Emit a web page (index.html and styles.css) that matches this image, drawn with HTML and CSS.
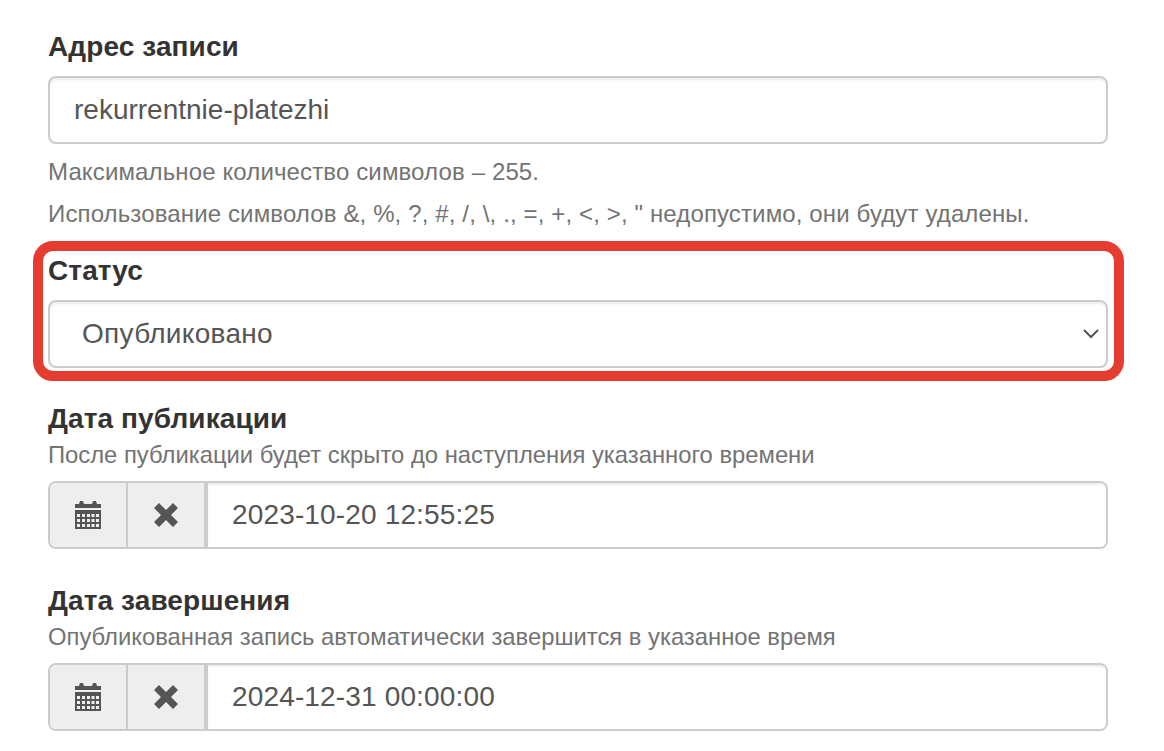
FILE: index.html
```html
<!DOCTYPE html>
<html lang="ru">
<head>
    <meta charset="UTF-8">
    <title>Адрес записи</title>
    <link rel="stylesheet" href="styles.css">
</head>
<body>
    <form class="form">
        <div class="form-group group-alias">
            <label class="label" for="alias">Адрес записи</label>
            <input class="control" type="text" id="alias" value="rekurrentnie-platezhi">
            <p class="help help-first">Максимальное количество символов – 255.</p>
            <p class="help help-second">Использование символов &amp;, %, ?, #, /, \, ., =, +, &lt;, &gt;, " недопустимо, они будут удалены.</p>
        </div>
        <div class="form-group group-status">
            <label class="label" for="status">Статус</label>
            <div class="control select" id="status">
                <span>Опубликовано</span>
                <svg class="chevron" viewBox="0 0 16 10"><path d="M1 1 8 8 15 1" fill="none" stroke="#555" stroke-width="2"/></svg>
            </div>
            <div class="highlight"></div>
        </div>
        <div class="form-group group-date">
            <label class="label" for="publish">Дата публикации</label>
            <p class="hint">После публикации будет скрыто до наступления указанного времени</p>
            <div class="input-group">
                <span class="addon">
                    <svg class="icon-calendar" viewBox="0 0 26 28"><path fill="#555" fill-rule="evenodd" d="M0 3h4l1-3h3l1 3h8l1-3h3l1 3h4v4H0zM0 9h26v19H0zM2 13v3h3v-3zm5 0v3h3v-3zm5 0v3h3v-3zm4.500 0v3h3v-3zm4.500 0v3h3v-3zM2 18v3h3v-3zm5 0v3h3v-3zm5 0v3h3v-3zm4.500 0v3h3v-3zm4.500 0v3h3v-3zM2 23v3h3v-3zm5 0v3h3v-3zm5 0v3h3v-3zm4.500 0v3h3v-3zm4.500 0v3h3v-3z"/></svg>
                </span>
                <span class="addon addon-last">
                    <svg class="icon-clear" viewBox="0 0 24 24"><path fill="#555" d="M5 0 12 7 19 0 24 5 17 12 24 19 19 24 12 17 5 24 0 19 7 12 0 5z"/></svg>
                </span>
                <input class="date-input" type="text" id="publish" value="2023-10-20 12:55:25">
            </div>
        </div>
        <div class="form-group group-date">
            <label class="label" for="finish">Дата завершения</label>
            <p class="hint">Опубликованная запись автоматически завершится в указанное время</p>
            <div class="input-group">
                <span class="addon">
                    <svg class="icon-calendar" viewBox="0 0 26 28"><path fill="#555" fill-rule="evenodd" d="M0 3h4l1-3h3l1 3h8l1-3h3l1 3h4v4H0zM0 9h26v19H0zM2 13v3h3v-3zm5 0v3h3v-3zm5 0v3h3v-3zm4.500 0v3h3v-3zm4.500 0v3h3v-3zM2 18v3h3v-3zm5 0v3h3v-3zm5 0v3h3v-3zm4.500 0v3h3v-3zm4.500 0v3h3v-3zM2 23v3h3v-3zm5 0v3h3v-3zm5 0v3h3v-3zm4.500 0v3h3v-3zm4.500 0v3h3v-3z"/></svg>
                </span>
                <span class="addon addon-last">
                    <svg class="icon-clear" viewBox="0 0 24 24"><path fill="#555" d="M5 0 12 7 19 0 24 5 17 12 24 19 19 24 12 17 5 24 0 19 7 12 0 5z"/></svg>
                </span>
                <input class="date-input" type="text" id="finish" value="2024-12-31 00:00:00">
            </div>
        </div>
    </form>
</body>
</html>
```

FILE: styles.css
```css
html, body {
    height: 751px;
    overflow: hidden;
}

body {
    margin: 0;
    background: #fff;
    font-family: "Liberation Sans", Arial, sans-serif;
    color: #333;
}

.form {
    width: 1060px;
    margin-left: 48px;
    padding-top: 28px;
}

.form-group {
    position: relative;
}

.group-status {
    margin-top: 21px;
}

.group-date {
    margin-top: 32px;
}

.group-date + .group-date {
    margin-top: 33px;
}

.label {
    display: block;
    height: 38px;
    line-height: 38px;
    font-size: 28px;
    font-weight: bold;
    letter-spacing: 0.1px;
}

.group-alias .label,
.group-status .label {
    margin-bottom: 10px;
}

.control {
    display: block;
    width: 100%;
    height: 68px;
    box-sizing: border-box;
    padding: 0 24px;
    border: 2px solid #ccc;
    border-radius: 8px;
    background: #fff;
    font-family: inherit;
    font-size: 28px;
    color: #555;
    box-shadow: inset 0 2px 2px rgba(0, 0, 0, 0.075);
}

.select {
    display: flex;
    align-items: center;
    justify-content: space-between;
    padding: 0 7px 0 32px;
    letter-spacing: 0.3px;
}

.chevron {
    width: 16px;
    height: 10px;
}

.help {
    margin: 0;
    font-size: 24px;
    line-height: 34px;
    letter-spacing: 0.13px;
    color: #737373;
}

.help-first {
    margin-top: 11px;
}

.help-second {
    margin-top: 8px;
}

.highlight {
    position: absolute;
    top: -11px;
    left: -15px;
    right: -16px;
    bottom: -13px;
    border: 10px solid #e53c32;
    border-radius: 20px;
    pointer-events: none;
}

.hint {
    margin: 0 0 9px;
    font-size: 23.8px;
    line-height: 34px;
    color: #737373;
}

.input-group {
    display: flex;
    height: 68px;
    box-sizing: border-box;
    border: 2px solid #ccc;
    border-radius: 8px;
    overflow: hidden;
}

.addon {
    display: flex;
    align-items: center;
    justify-content: center;
    width: 76px;
    background: #eee;
    border-right: 2px solid #ccc;
}

.addon-last {
    border-right-width: 4px;
}

.icon-calendar {
    width: 26px;
    height: 28px;
}

.icon-clear {
    width: 24px;
    height: 24px;
}

.date-input {
    flex: 1;
    min-width: 0;
    padding: 0 24px;
    border: 0;
    font-family: inherit;
    font-size: 28px;
    letter-spacing: 0.15px;
    color: #555;
    box-shadow: inset 0 2px 2px rgba(0, 0, 0, 0.075);
}
```
